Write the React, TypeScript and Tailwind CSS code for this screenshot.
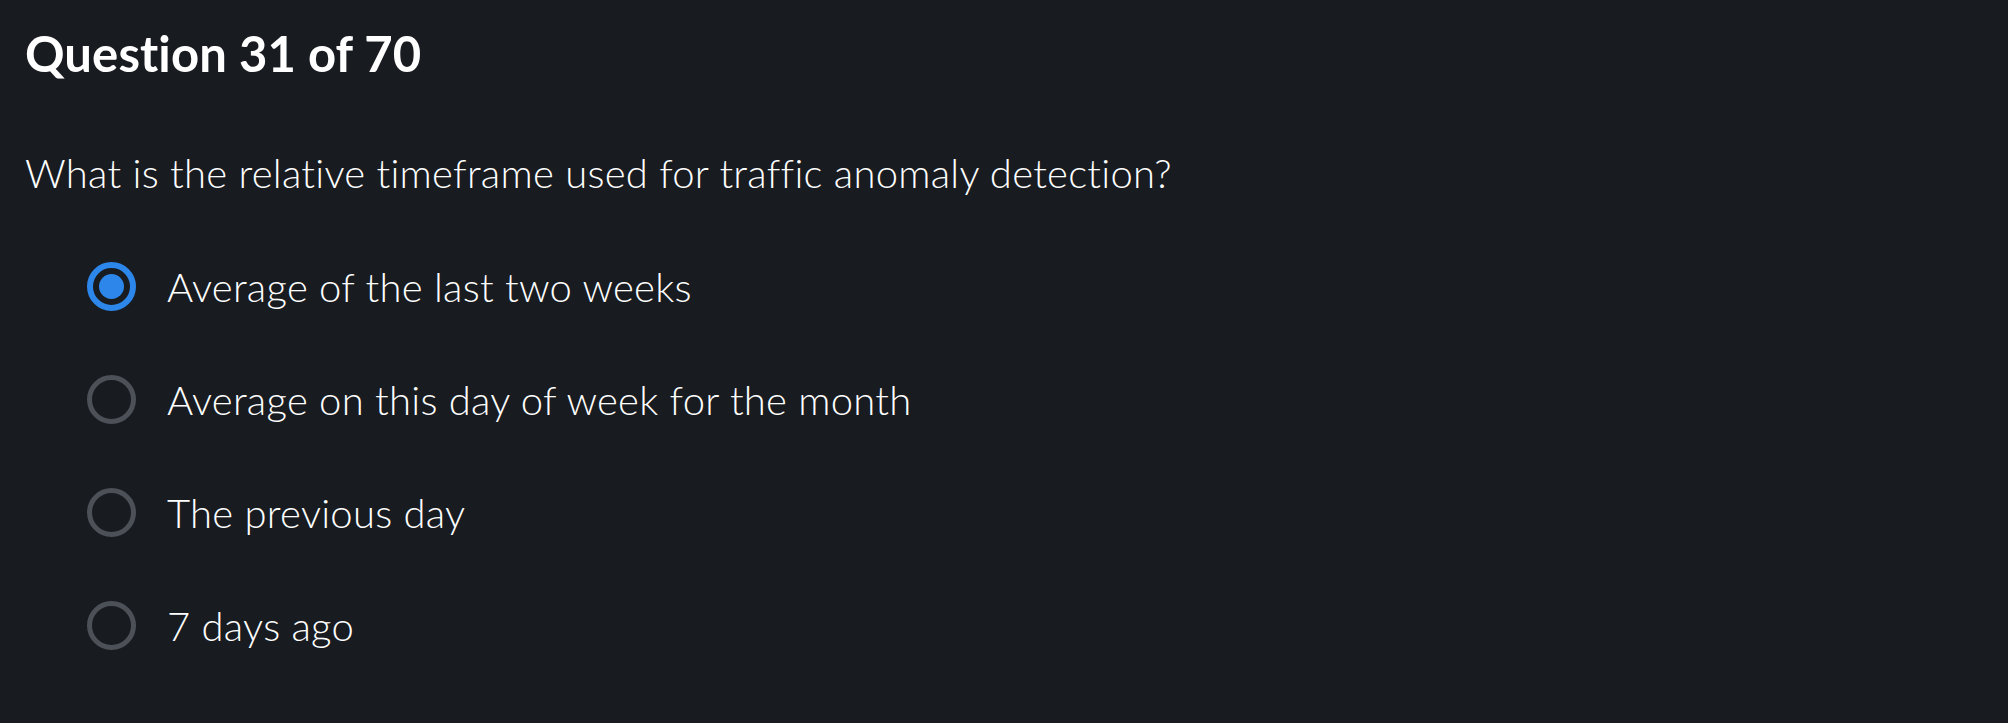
const options = [
  "Average of the last two weeks",
  "Average on this day of week for the month",
  "The previous day",
  "7 days ago",
];

function Radio({ checked }: { checked: boolean }) {
  if (checked) {
    return (
      <div className="flex h-[49px] w-[49px] shrink-0 items-center justify-center rounded-full border-[6px] border-[#2d87eb]">
        <div className="h-[25px] w-[25px] rounded-full bg-[#2d87eb]" />
      </div>
    );
  }
  return <div className="h-[49px] w-[49px] shrink-0 rounded-full border-[5px] border-[#4c5057]" />;
}

export default function App() {
  return (
    <div className="min-h-screen bg-[#181b20] pl-[25px] pt-[29px] font-['Lato',sans-serif] text-white [font-variant-ligatures:none]">
      <h1 className="text-[49px] font-bold leading-none tracking-[0.1px]">Question 31 of 70</h1>
      <p className="mt-[75px] text-[40px] font-light leading-none tracking-[0.25px]">
        What is the relative timeframe used for traffic anomaly detection?
      </p>
      <div className="mt-[37px] flex flex-col pl-[62px]">
        {options.map((option, index) => (
          <label key={index} className="flex h-[113px] items-center gap-[31px]">
            <Radio checked={index === 0} />
            <span className="text-[40px] font-light leading-none tracking-[0.25px]">{option}</span>
          </label>
        ))}
      </div>
    </div>
  );
}
